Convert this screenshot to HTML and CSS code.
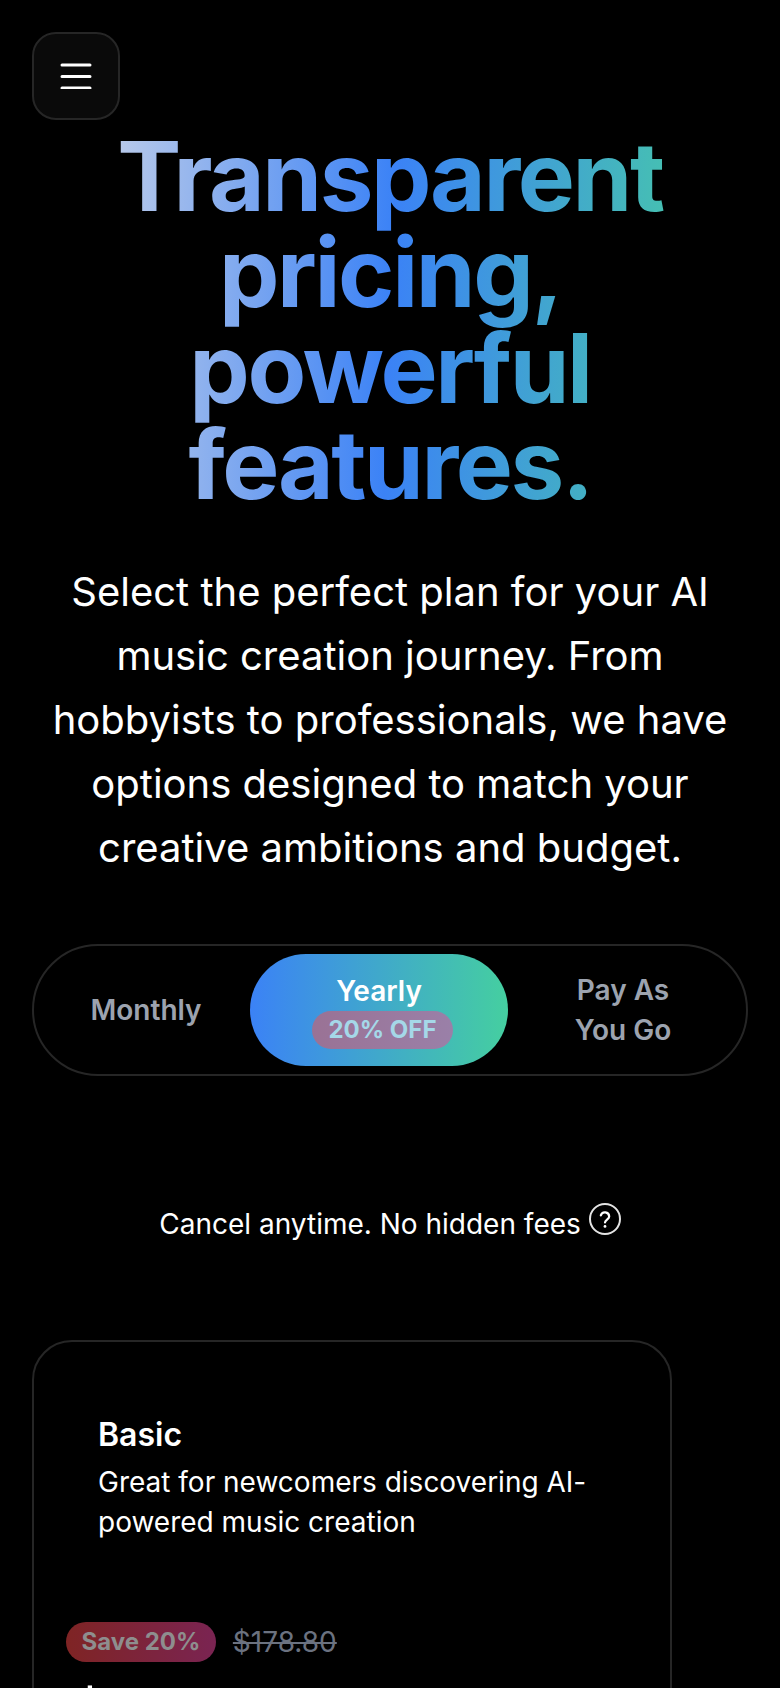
FILE: index.html
```html
<!DOCTYPE html>
<html lang="en">
<head>
<meta charset="utf-8">
<title>Pricing</title>
<link rel="stylesheet" href="styles.css">
</head>
<body>
<main class="page">
  <button class="menu-btn" aria-label="Menu">
    <svg class="menu-icon" width="32" height="26" viewBox="0 0 32 26"><path d="M2 2h28M2 13.5h28M2 25h28" stroke="#fff" stroke-width="3" stroke-linecap="round" fill="none"/></svg>
  </button>
  <h1 class="title">Transparent pricing, powerful features.</h1>
  <p class="lead">Select the perfect plan for your AI music creation journey. From hobbyists to professionals, we have options designed to match your creative ambitions and budget.</p>
  <div class="toggle">
    <button class="tab">Monthly</button>
    <button class="tab active">Yearly<span class="off">20% OFF</span></button>
    <button class="tab">Pay As You Go</button>
  </div>
  <p class="note">Cancel anytime. No hidden fees
    <svg class="help" width="32" height="32" viewBox="0 0 32 32"><circle cx="16" cy="16" r="15" stroke="#e4e4e4" stroke-width="2" fill="none"/><path d="M11.8 12.4a4.3 4.3 0 0 1 8.4 1c0 2.8-4.2 3.4-4.2 6" stroke="#fff" stroke-width="2.2" stroke-linecap="round" fill="none"/><circle cx="16" cy="23.4" r="1.4" fill="#fff"/></svg>
  </p>
  <section class="card">
    <h2 class="plan">Basic</h2>
    <p class="desc">Great for newcomers discovering AI-powered music creation</p>
    <div class="save-row"><span class="save">Save 20%</span><s class="old">$178.80</s></div>
    <div class="price">$11.92</div>
  </section>
</main>
</body>
</html>
```
FILE: styles.css
```css
* { box-sizing: border-box; }
html, body { margin: 0; background: #000; height: 1688px; overflow: hidden; }
body { font-family: Inter, "Liberation Sans", sans-serif; color: #fff; }
button { font-family: inherit; }
.page { padding: 32px; }
.menu-btn { display: flex; align-items: center; justify-content: center; width: 88px; height: 88px; padding: 0; background: #0a0a0a; border: 2px solid #262626; border-radius: 24px; }
.title { margin: 8px 0 0; font-size: 96px; line-height: 96px; font-weight: 700; letter-spacing: -2.4px; text-align: center; background-image: linear-gradient(92deg, #b6c8ea 12.3%, #3b82f6 50%, #46c1b1 88.4%); -webkit-background-clip: text; background-clip: text; color: transparent; }
.lead { margin: 48px 0 0; font-size: 40px; line-height: 64px; text-align: center; }
.toggle { display: grid; grid-template-columns: 208px 258px 1fr; margin-top: 64px; padding: 8px; border: 2px solid #262626; border-radius: 66px; min-height: 132px; align-items: center; }
.tab { display: flex; flex-direction: column; align-items: center; background: none; border: 0; color: #9ca3af; font-size: 28px; line-height: 40px; font-weight: 600; padding: 0 40px; }
.tab.active { color: #fff; height: 112px; justify-content: center; border-radius: 56px; background: linear-gradient(90deg, #3b82f6, #45cfa0); }
.off { margin-left: 7px; padding: 0 16px; font-size: 24px; line-height: 38px; font-weight: 700; border-radius: 19px; background: linear-gradient(90deg, #9a7295, #9a80a8); color: #a5d8e8; white-space: nowrap; }
.note { margin: 128px 0 0; font-size: 28px; line-height: 40px; text-align: center; }
.help { vertical-align: -1px; margin-top: -1px; }
.card { width: 640px; margin-top: 96px; height: 500px; padding: 69px 32px 0; border: 2px solid #262626; border-radius: 40px; }
.plan { margin: 0 0 3px 32px; font-size: 32px; line-height: 48px; font-weight: 600; }
.desc { margin: 0 32px; font-size: 28px; line-height: 40px; }
.save-row { display: flex; align-items: center; gap: 17px; margin-top: 80px; }
.save { padding: 0 15.5px; font-size: 24px; line-height: 40px; font-weight: 700; border-radius: 20px; background: linear-gradient(90deg, #7f2424, #7a2452); color: #8e8e8e; white-space: nowrap; }
.old { color: #6b7280; font-size: 28px; }
.price { margin-top: 15px; font-size: 72px; line-height: 84px; font-weight: 700; }
```
